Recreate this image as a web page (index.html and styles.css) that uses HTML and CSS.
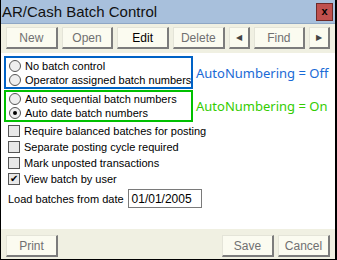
FILE: index.html
```html
<!DOCTYPE html>
<html lang="en">

<head>
    <meta charset="UTF-8">
    <title>AR/Cash Batch Control</title>
    <link rel="stylesheet" href="styles.css">
</head>

<body>
    <div class="window">
        <div class="titlebar">
            <span class="title">AR/Cash Batch Control</span>
            <span class="close">x</span>
        </div>

        <div class="toolbar">
            <button class="btn">New</button>
            <button class="btn">Open</button>
            <button class="btn active">Edit</button>
            <button class="btn">Delete</button>
            <button class="btn arrow">&#9664;</button>
            <button class="btn">Find</button>
            <button class="btn arrow">&#9654;</button>
        </div>

        <div class="content">
            <div class="group-row">
                <div class="group group-off">
                    <label class="option"><span class="radio"></span>No batch control</label>
                    <label class="option"><span class="radio"></span>Operator assigned batch numbers</label>
                </div>
                <div class="note note-off">AutoNumbering = Off</div>
            </div>
            <div class="group-row">
                <div class="group group-on">
                    <label class="option"><span class="radio"></span>Auto sequential batch numbers</label>
                    <label class="option"><span class="radio checked"></span>Auto date batch numbers</label>
                </div>
                <div class="note note-on">AutoNumbering = On</div>
            </div>

            <div class="checks">
                <label class="option"><span class="check"></span>Require balanced batches for posting</label>
                <label class="option"><span class="check"></span>Separate posting cycle required</label>
                <label class="option"><span class="check"></span>Mark unposted transactions</label>
                <label class="option"><span class="check checked">&#10004;</span>View batch by user</label>
            </div>

            <div class="date-row">
                <span>Load batches from date</span>
                <span class="date-input">01/01/2005</span>
            </div>
        </div>

        <div class="footer">
            <button class="btn">Print</button>
            <span class="spacer"></span>
            <button class="btn">Save</button>
            <button class="btn">Cancel</button>
        </div>
    </div>
</body>

</html>
```

FILE: styles.css
```css
* {
    box-sizing: border-box;
}

body {
    margin: 0;
    font-family: 'Liberation Sans', sans-serif;
    font-size: 11px;
    color: #000;
}

.window {
    width: 337px;
    height: 260px;
    display: flex;
    flex-direction: column;
    border-left: 1px solid #000;
    border-right: 2px solid #000;
    border-bottom: 1px solid #000;
    background: #fff;
}

.titlebar {
    height: 24px;
    background: #a8c0dc;
    border-bottom: 1px solid #8ea6c4;
    display: flex;
    align-items: center;
    justify-content: space-between;
    padding: 0 2px 0 1px;
}

.title {
    font-size: 15px;
    color: #111;
}

.close {
    width: 17px;
    height: 18px;
    background: #c0504d;
    border: 1px solid #6e2a28;
    font-size: 11px;
    font-weight: bold;
    line-height: 15px;
    text-align: center;
}

.toolbar {
    height: 29px;
    background: #f0f0e2;
    display: flex;
    gap: 4px;
    padding: 3px 5px 0;
}

.btn {
    width: 52px;
    height: 22px;
    padding: 0;
    font-family: 'Liberation Sans', sans-serif;
    font-size: 12px;
    color: #707070;
    background: #fbfbf0;
    border: 1px solid #e4e4d8;
    border-right: 2px solid #7c7c7c;
    border-bottom: 2px solid #7c7c7c;
}

.btn.active {
    color: #000;
}

.btn.arrow {
    width: 21px;
    font-size: 8px;
    color: #444;
}

.content {
    flex: 1;
    padding: 3px 0 0 3px;
}

.group-row {
    display: flex;
    align-items: center;
    margin-bottom: 1px;
}

.group {
    width: 189px;
    border: 2px solid;
    padding: 0 0 0 3px;
}

.group-off {
    border-color: #0062c6;
    padding-top: 1px;
}

.group-on {
    border-color: #00c000;
}

.note {
    font-family: 'Noto Sans', sans-serif;
    font-size: 13px;
    padding-left: 3px;
    white-space: nowrap;
}

.note-off {
    color: #1a6ad6;
}

.note-on {
    color: #33cc00;
}

.option {
    height: 14px;
    display: flex;
    align-items: center;
    gap: 4px;
    white-space: nowrap;
}

.radio {
    flex-shrink: 0;
    width: 12px;
    height: 12px;
    border-radius: 50%;
    border: 1px solid #555;
    background: #eeeeee;
    display: flex;
    align-items: center;
    justify-content: center;
}

.radio.checked::after {
    content: "";
    width: 4px;
    height: 4px;
    border-radius: 50%;
    background: #000;
}

.checks {
    padding: 0 0 0 4px;
}

.checks .option {
    height: 16px;
}

.check {
    flex-shrink: 0;
    width: 12px;
    height: 12px;
    border: 1px solid #555;
    background: #e8e8e8;
    font-size: 10px;
    line-height: 10px;
    text-align: center;
}

.date-row {
    display: flex;
    align-items: center;
    gap: 4px;
    padding: 2px 0 0 4px;
}

.date-input {
    width: 74px;
    height: 19px;
    border: 1px solid #7a7a7a;
    padding: 2px 3px;
    font-size: 12px;
}

.footer {
    height: 30px;
    background: #f0f0e2;
    display: flex;
    gap: 4px;
    padding: 6px 5px 0;
}

.spacer {
    flex: 1;
}
```
